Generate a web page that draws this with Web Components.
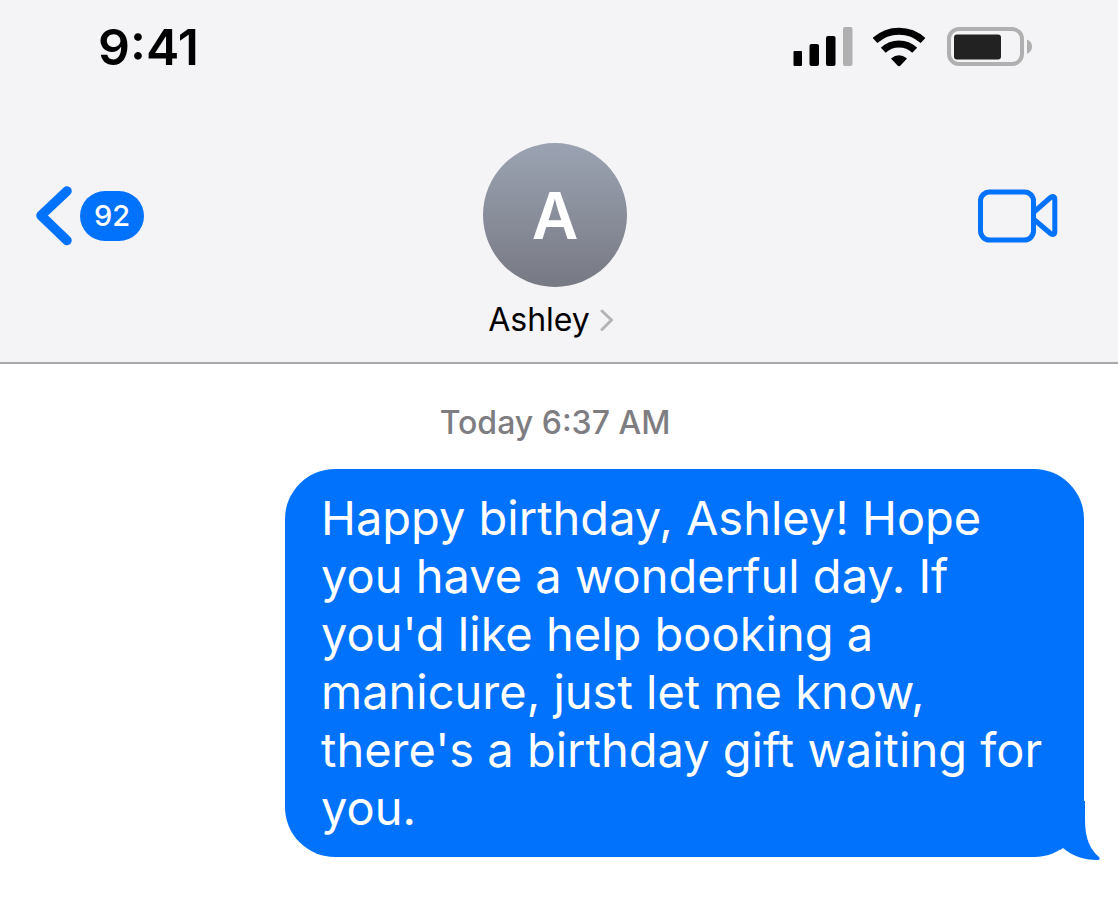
<!DOCTYPE html>
<html lang="en">
<head>
<meta charset="utf-8">
<meta name="viewport" content="width=device-width, initial-scale=1">
<title>Ashley</title>
<style>
  body {
    margin: 0;
    background: #fff;
    font-family: Inter, "Liberation Sans", sans-serif;
  }
</style>
</head>
<body>
<message-screen>
  <status-bar slot="header" time="9:41"></status-bar>
  <chat-header slot="header" name="Ashley" unread="92"></chat-header>
  <chat-stamp>Today 6:37 AM</chat-stamp>
  <chat-bubble>Happy birthday, Ashley! Hope you have a wonderful day. If you'd like help booking a manicure, just let me know, there's a birthday gift waiting for you.</chat-bubble>
</message-screen>

<script>
class MessageScreen extends HTMLElement {
  constructor() {
    super();
    this.attachShadow({ mode: "open" });
  }

  connectedCallback() {
    this.shadowRoot.innerHTML = /* html */ `
    <style>${MessageScreen.STYLES}</style>
    <header><slot name="header"></slot></header>
    <main><slot></slot></main>`;
  }

  static STYLES = /* css */ `
  :host {
    --blue: #0072fc;
    display: flex;
    flex-direction: column;
    min-height: 100vh;
  }

  header {
    background: #f4f3f6;
    border-bottom: 2px solid #a9a9ab;
  }

  main {
    display: flex;
    flex-direction: column;
    gap: 26px;
    padding: 39px 34px 56px 26px;
  }`;
}

class StatusBar extends HTMLElement {
  constructor() {
    super();
    this.attachShadow({ mode: "open" });
  }

  connectedCallback() {
    this.shadowRoot.innerHTML = /* html */ `
    <style>${StatusBar.STYLES}</style>
    <time></time>
    <div class="icons">
      <svg width="60" height="40" viewBox="0 0 60 40" role="img" aria-label="Signal">
        <rect x="0.500" y="24" width="8.500" height="15" rx="1"/>
        <rect x="16.500" y="17" width="9.500" height="22" rx="2"/>
        <rect x="33" y="9" width="9.500" height="30" rx="2"/>
        <rect x="50" y="0" width="9.500" height="39" rx="2" fill="#b0b0b0"/>
      </svg>
      <svg width="54" height="40" viewBox="0 0 54 40" role="img" aria-label="Wi-Fi">
        <path d="M2 13.500A35.500 35.500 0 0 1 50 13.500" fill="none" stroke="#000" stroke-width="7"/>
        <path d="M10.300 23.300A22.500 22.500 0 0 1 41.700 23.300" fill="none" stroke="#000" stroke-width="7"/>
        <path d="M18 31.500Q26 25 34 31.500L27.500 38.500Q26 40 24.500 38.500Z"/>
      </svg>
      <svg class="battery" width="86" height="40" viewBox="0 0 86 40" role="img" aria-label="Battery">
        <rect x="2" y="2" width="73" height="35" rx="10" fill="none" stroke="#b0b0b0" stroke-width="4"/>
        <rect x="7" y="7.500" width="47" height="25" rx="3" fill="#222"/>
        <path d="M80 12.500Q85 14.500 85 19.500T80 27Z" fill="#b0b0b0"/>
      </svg>
    </div>`;
    this.shadowRoot.querySelector("time").textContent = this.getAttribute("time");
  }

  static STYLES = /* css */ `
  :host {
    display: flex;
    align-items: center;
    justify-content: space-between;
    padding: 17px 85px 17px 98px;
    color: #000;
  }

  time {
    font-size: 50px;
    font-weight: 600;
    line-height: 60px;
  }

  .icons {
    display: flex;
    align-items: center;
    gap: 20px;
  }

  svg { display: block; }`;
}

class ChatHeader extends HTMLElement {
  constructor() {
    super();
    this.attachShadow({ mode: "open" });
  }

  connectedCallback() {
    this.shadowRoot.innerHTML = /* html */ `
    <style>${ChatHeader.STYLES}</style>
    <button class="back" type="button" aria-label="Back to messages">
      <svg width="36" height="60" viewBox="0 0 36 60" aria-hidden="true">
        <path d="M31 5L5 29.500L31 54.500" fill="none" stroke="currentColor" stroke-width="9.500" stroke-linecap="round" stroke-linejoin="round"/>
      </svg>
      <span class="unread"></span>
    </button>
    <button class="contact" type="button">
      <span class="avatar"></span>
      <span class="name">
        <span class="label"></span>
        <svg width="14" height="22" viewBox="0 0 14 22" aria-hidden="true">
          <path d="M2 2L11.500 11L2 20.500" fill="none" stroke="#b4b4b7" stroke-width="3" stroke-linecap="round" stroke-linejoin="round"/>
        </svg>
      </span>
    </button>
    <button class="video" type="button" aria-label="Video call">
      <svg width="80" height="54" viewBox="0 0 80 54" aria-hidden="true">
        <g fill="none" stroke="currentColor" stroke-width="5" stroke-linejoin="round">
          <rect x="2.500" y="3" width="53" height="48" rx="9"/>
          <path d="M56 23L72.500 8.500Q76.800 6 76.800 10.500V42.500Q76.800 47 72.500 44.500L56 30.500"/>
        </g>
      </svg>
    </button>`;

    const name = this.getAttribute("name");
    this.shadowRoot.querySelector(".avatar").textContent = name[0];
    this.shadowRoot.querySelector(".label").textContent = name;
    this.shadowRoot.querySelector(".unread").textContent = this.getAttribute("unread");
  }

  static STYLES = /* css */ `
  :host {
    display: grid;
    grid-template-columns: 1fr auto 1fr;
    padding: 49px 44px 22px 36px;
  }

  button {
    display: flex;
    margin: 0;
    padding: 0;
    border: 0;
    background: none;
    color: var(--blue);
    font: inherit;
    cursor: pointer;
  }

  svg { display: block; }

  .back, .video {
    align-items: center;
    align-self: start;
    height: 146px;
  }

  .back {
    justify-self: start;
    gap: 8px;
  }

  .video {
    justify-self: end;
    padding-right: 16px;
  }

  .unread {
    padding: 8px 14px;
    border-radius: 25px;
    background: var(--blue);
    color: #fff;
    font-size: 29px;
    font-weight: 500;
    line-height: 34px;
  }

  .contact {
    flex-direction: column;
    align-items: center;
    gap: 13px;
    color: #000;
  }

  .avatar {
    display: grid;
    place-items: center;
    width: 144px;
    height: 144px;
    border-radius: 50%;
    background: linear-gradient(#9ba3b2, #777983);
    color: #fff;
    font-size: 64px;
    font-weight: 600;
  }

  .name {
    display: flex;
    align-items: center;
    gap: 10px;
    padding-right: 8px;
    font-size: 32px;
    line-height: 40px;
  }`;
}

class ChatStamp extends HTMLElement {
  constructor() {
    super();
    this.attachShadow({ mode: "open" });
  }

  connectedCallback() {
    this.shadowRoot.innerHTML = /* html */ `
    <style>${ChatStamp.STYLES}</style>
    <slot></slot>`;
  }

  static STYLES = /* css */ `
  :host {
    display: block;
    color: #7e7e82;
    font-size: 32px;
    font-weight: 500;
    line-height: 40px;
    text-align: center;
  }`;
}

class ChatBubble extends HTMLElement {
  constructor() {
    super();
    this.attachShadow({ mode: "open" });
  }

  connectedCallback() {
    this.shadowRoot.innerHTML = /* html */ `
    <style>${ChatBubble.STYLES}</style>
    <p><slot></slot></p>
    <svg width="40" height="62" viewBox="0 0 40 62" aria-hidden="true">
      <path d="M0 2H25V20C25 40 30 50 39 58Q41 61 37 61C24 61 12 57 3 49L0 51Z" fill="currentColor"/>
    </svg>`;
  }

  static STYLES = /* css */ `
  :host {
    display: block;
    position: relative;
    box-sizing: border-box;
    align-self: flex-end;
    max-width: 799px;
    padding: 20px 36px;
    border-radius: 50px;
    background: var(--blue);
    color: #fff;
  }

  p {
    margin: 0;
    font-size: 47px;
    line-height: 58px;
  }

  /* tail hangs over the bottom right corner */
  svg {
    position: absolute;
    right: -16px;
    bottom: -4px;
    color: var(--blue);
  }`;
}

customElements.define("message-screen", MessageScreen);
customElements.define("status-bar", StatusBar);
customElements.define("chat-header", ChatHeader);
customElements.define("chat-stamp", ChatStamp);
customElements.define("chat-bubble", ChatBubble);
</script>
</body>
</html>
